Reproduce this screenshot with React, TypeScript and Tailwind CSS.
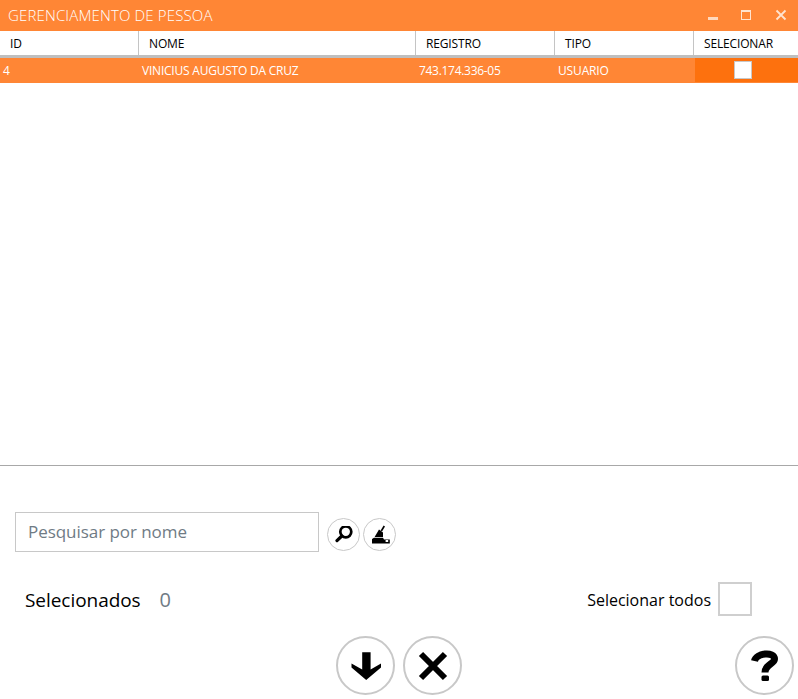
import React from 'react';

const columns = [
  { title: 'ID', cell: '4', track: 'tracking-[-0.3px]' },
  { title: 'NOME', cell: 'VINICIUS AUGUSTO DA CRUZ', track: 'tracking-[-0.22px]' },
  { title: 'REGISTRO', cell: '743.174.336-05', track: 'tracking-[-0.3px]' },
  { title: 'TIPO', cell: 'USUARIO', track: 'tracking-[-0.15px]' },
];

const SearchIcon = () => (
  <svg width="18" height="18" viewBox="0 0 18 18" fill="none" stroke="#000">
    <circle cx="10.8" cy="5.8" r="5.5" strokeWidth="2.7" />
    <path d="M6.8 10 L2 14.6" strokeWidth="3.2" strokeLinecap="round" />
  </svg>
);

const BroomIcon = () => (
  <svg width="20" height="20" viewBox="0 0 20 20">
    <path d="M13.6 0.5 L15 1.5 L12 6.5 L10.6 5.6 Z" fill="#000" />
    <path d="M9 4.6 L13 7.6 L13 12 L4.6 12 Z" fill="#000" />
    <path d="M2 18.6 V14 L4 12.8 H13 L14 14.6 H19.8 V18.6 Z" fill="#000" />
    <rect x="15.6" y="15" width="2.6" height="2" fill="#fff" />
  </svg>
);

const ArrowIcon = () => (
  <svg width="32" height="32" viewBox="0 0 32 32">
    <path d="M12.2 2.2 H20.6 V19.5 L31 13.5 V17.5 L16.2 30 L1.5 17.5 V13.5 L12.2 19.5 Z" fill="#000" />
  </svg>
);

const CloseIcon = () => (
  <svg width="30" height="30" viewBox="0 0 30 30" fill="none" stroke="#000">
    <path d="M3 3 L27 27 M27 3 L3 27" strokeWidth="6" />
  </svg>
);

const HelpIcon = () => (
  <svg width="40" height="40" viewBox="0 0 40 40" fill="none">
    <path d="M9.5 15 C11 7, 29.5 5, 29.5 13 C29.5 18, 20 18, 20 26.5" stroke="#000" strokeWidth="7" />
    <rect x="16.5" y="29.5" width="7.5" height="5.5" rx="1.5" fill="#000" />
  </svg>
);

const App = () => {
  return (
    <div className="w-[798px] h-[699px] bg-white flex flex-col overflow-hidden font-['Open_Sans',sans-serif] text-black">
      {/* title bar */}
      <div className="h-[31px] shrink-0 bg-[#ff8635] flex items-center justify-between">
        <span className="pl-2 text-[15px] tracking-[0.15px] font-light text-white">GERENCIAMENTO DE PESSOA</span>
        <div className="flex items-center text-white">
          <div className="w-[10px] h-[3px] mt-[5px] bg-[#ffd8bd] mr-[23px]" />
          <div className="w-[10px] h-[10px] -mt-[1px] border border-[#ffe3cf] border-t-2 mr-[24px]" />
          <svg width="12" height="12" viewBox="0 0 12 12" className="mr-[11px] -mt-[1px]" stroke="#ffe3cf" strokeWidth="1.8">
            <path d="M1.5 1.5 L10.5 10.5 M10.5 1.5 L1.5 10.5" />
          </svg>
        </div>
      </div>

      {/* table */}
      <div className="h-[27px] shrink-0 grid grid-cols-[139px_277px_139px_139px_104px] border-b-[3px] border-[#bfbfbf]">
        {columns.map((col) => (
          <div key={col.title} className="border-r border-[#c4c4c4] pl-[10px] pt-[2px] flex items-center text-[12px] font-medium tracking-[-0.15px]">
            {col.title}
          </div>
        ))}
        <div className="pl-[10px] pt-[2px] flex items-center text-[12px] font-medium tracking-[-0.15px]">SELECIONAR</div>
      </div>
      <div className="h-[25px] shrink-0 bg-[#ff8635] grid grid-cols-[139px_277px_139px_139px_104px] text-white text-[12px]">
        {columns.map((col) => (
          <div key={col.title} className={`pl-[3px] flex items-center ${col.track}`}>{col.cell}</div>
        ))}
        <div className="ml-[1px] h-[24px] bg-[#fd710e] flex items-center pl-[39px]">
          <div className="w-[18px] h-[18px] bg-white border border-[#c8c8c8]" />
        </div>
      </div>

      <div className="flex-1" />

      {/* bottom */}
      <div className="h-[234px] shrink-0 border-t border-[#a8a8a8] flex flex-col">
        <div className="mt-[46px] pl-[15px] flex items-center">
          <div className="w-[304px] h-[40px] border border-[#c8c8c8] flex items-center pl-3 text-[17px] tracking-[-0.05px] text-[#6f7b85]">
            Pesquisar por nome
          </div>
          <button className="ml-2 mt-[5px] w-[33px] h-[33px] rounded-full border border-[#c8c8c8] flex items-center justify-center">
            <SearchIcon />
          </button>
          <button className="ml-[3px] mt-[5px] w-[33px] h-[33px] rounded-full border border-[#c8c8c8] flex items-center justify-center">
            <BroomIcon />
          </button>
        </div>

        <div className="mt-[30px] pl-[25px] pr-[46px] flex items-center justify-between">
          <div className="flex items-baseline pt-[2px]">
            <span className="text-[19px] tracking-[-0.05px]">Selecionados</span>
            <span className="ml-[19px] text-[20px] text-[#6f7b85]">0</span>
          </div>
          <div className="flex items-center">
            <span className="text-[16px] pt-[1px]">Selecionar todos</span>
            <div className="ml-[7px] w-[34px] h-[34px] border-2 border-[#cfcfcf]" />
          </div>
        </div>

        <div className="relative mt-[20px] flex justify-center gap-[8px] h-[59px]">
          <button className="w-[59px] h-[59px] rounded-full border-2 border-[#c8c8c8] flex items-center justify-center">
            <ArrowIcon />
          </button>
          <button className="w-[59px] h-[59px] rounded-full border-2 border-[#c8c8c8] flex items-center justify-center">
            <CloseIcon />
          </button>
          <button className="absolute right-[4px] top-0 w-[59px] h-[59px] rounded-full border-2 border-[#c8c8c8] flex items-center justify-center">
            <HelpIcon />
          </button>
        </div>
      </div>
    </div>
  );
};

export default App;
